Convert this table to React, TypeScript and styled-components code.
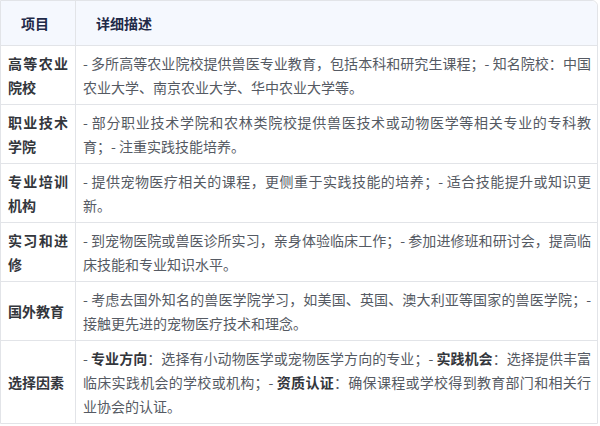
import React from "react";
import styled, { createGlobalStyle } from "styled-components";

const GlobalStyle = createGlobalStyle`
  html, body { margin: 0; padding: 0; background: #ffffff; }
  body { font-family: "Noto Sans CJK SC", "Noto Sans", sans-serif; }
`;

const Table = styled.table`
  width: 598px;
  border-collapse: separate;
  border-spacing: 0;
  border: 1px solid #e2e4e8;
  border-radius: 0 6px 0 0;
  font-size: 14px;
  line-height: 24px;
  color: #555a63;
  text-align: justify;
`;

const HeadCell = styled.th<{ $first?: boolean }>`
  background: #f5f8fe;
  color: #1f2a48;
  font-weight: 700;
  text-align: left;
  padding: 10px 8px 10px 20px;
  border-bottom: 1px solid #e2e4e8;
  border-left: ${(p) => (p.$first ? "none" : "1px solid #e2e4e8")};
  width: ${(p) => (p.$first ? "46px" : "auto")};
  border-radius: ${(p) => (p.$first ? "0" : "0 6px 0 0")};
`;

const Row = styled.tr<{ $last?: boolean }>`
  & > td {
    border-bottom: ${(p) => (p.$last ? "none" : "1px solid #e2e4e8")};
  }
`;

const LabelCell = styled.td`
  font-weight: 700;
  color: #33363c;
  padding: 5px 7px;
  vertical-align: middle;
  text-align: justify;
`;

const DescCell = styled.td`
  padding: 5px 6px 5px 7px;
  border-left: 1px solid #e2e4e8;
  vertical-align: middle;
`;

const Strong = styled.strong`
  font-weight: 700;
  color: #33363c;
`;

type Item = { label: string; desc: React.ReactNode };

const items: Item[] = [
  {
    label: "高等农业院校",
    desc: "- 多所高等农业院校提供兽医专业教育，包括本科和研究生课程；- 知名院校：中国农业大学、南京农业大学、华中农业大学等。",
  },
  {
    label: "职业技术学院",
    desc: "- 部分职业技术学院和农林类院校提供兽医技术或动物医学等相关专业的专科教育；- 注重实践技能培养。",
  },
  {
    label: "专业培训机构",
    desc: "- 提供宠物医疗相关的课程，更侧重于实践技能的培养；- 适合技能提升或知识更新。",
  },
  {
    label: "实习和进修",
    desc: "- 到宠物医院或兽医诊所实习，亲身体验临床工作；- 参加进修班和研讨会，提高临床技能和专业知识水平。",
  },
  {
    label: "国外教育",
    desc: "- 考虑去国外知名的兽医学院学习，如美国、英国、澳大利亚等国家的兽医学院；- 接触更先进的宠物医疗技术和理念。",
  },
  {
    label: "选择因素",
    desc: (
      <>
        - <Strong>专业方向</Strong>：选择有小动物医学或宠物医学方向的专业；- <Strong>实践机会</Strong>：选择提供丰富临床实践机会的学校或机构；- <Strong>资质认证</Strong>：确保课程或学校得到教育部门和相关行业协会的认证。
      </>
    ),
  },
];

export default function App() {
  return (
    <>
      <GlobalStyle />
      <Table>
        <thead>
          <tr>
            <HeadCell $first>项目</HeadCell>
            <HeadCell>详细描述</HeadCell>
          </tr>
        </thead>
        <tbody>
          {items.map((it, i) => (
            <Row key={it.label} $last={i === items.length - 1}>
              <LabelCell>{it.label}</LabelCell>
              <DescCell>{it.desc}</DescCell>
            </Row>
          ))}
        </tbody>
      </Table>
    </>
  );
}
